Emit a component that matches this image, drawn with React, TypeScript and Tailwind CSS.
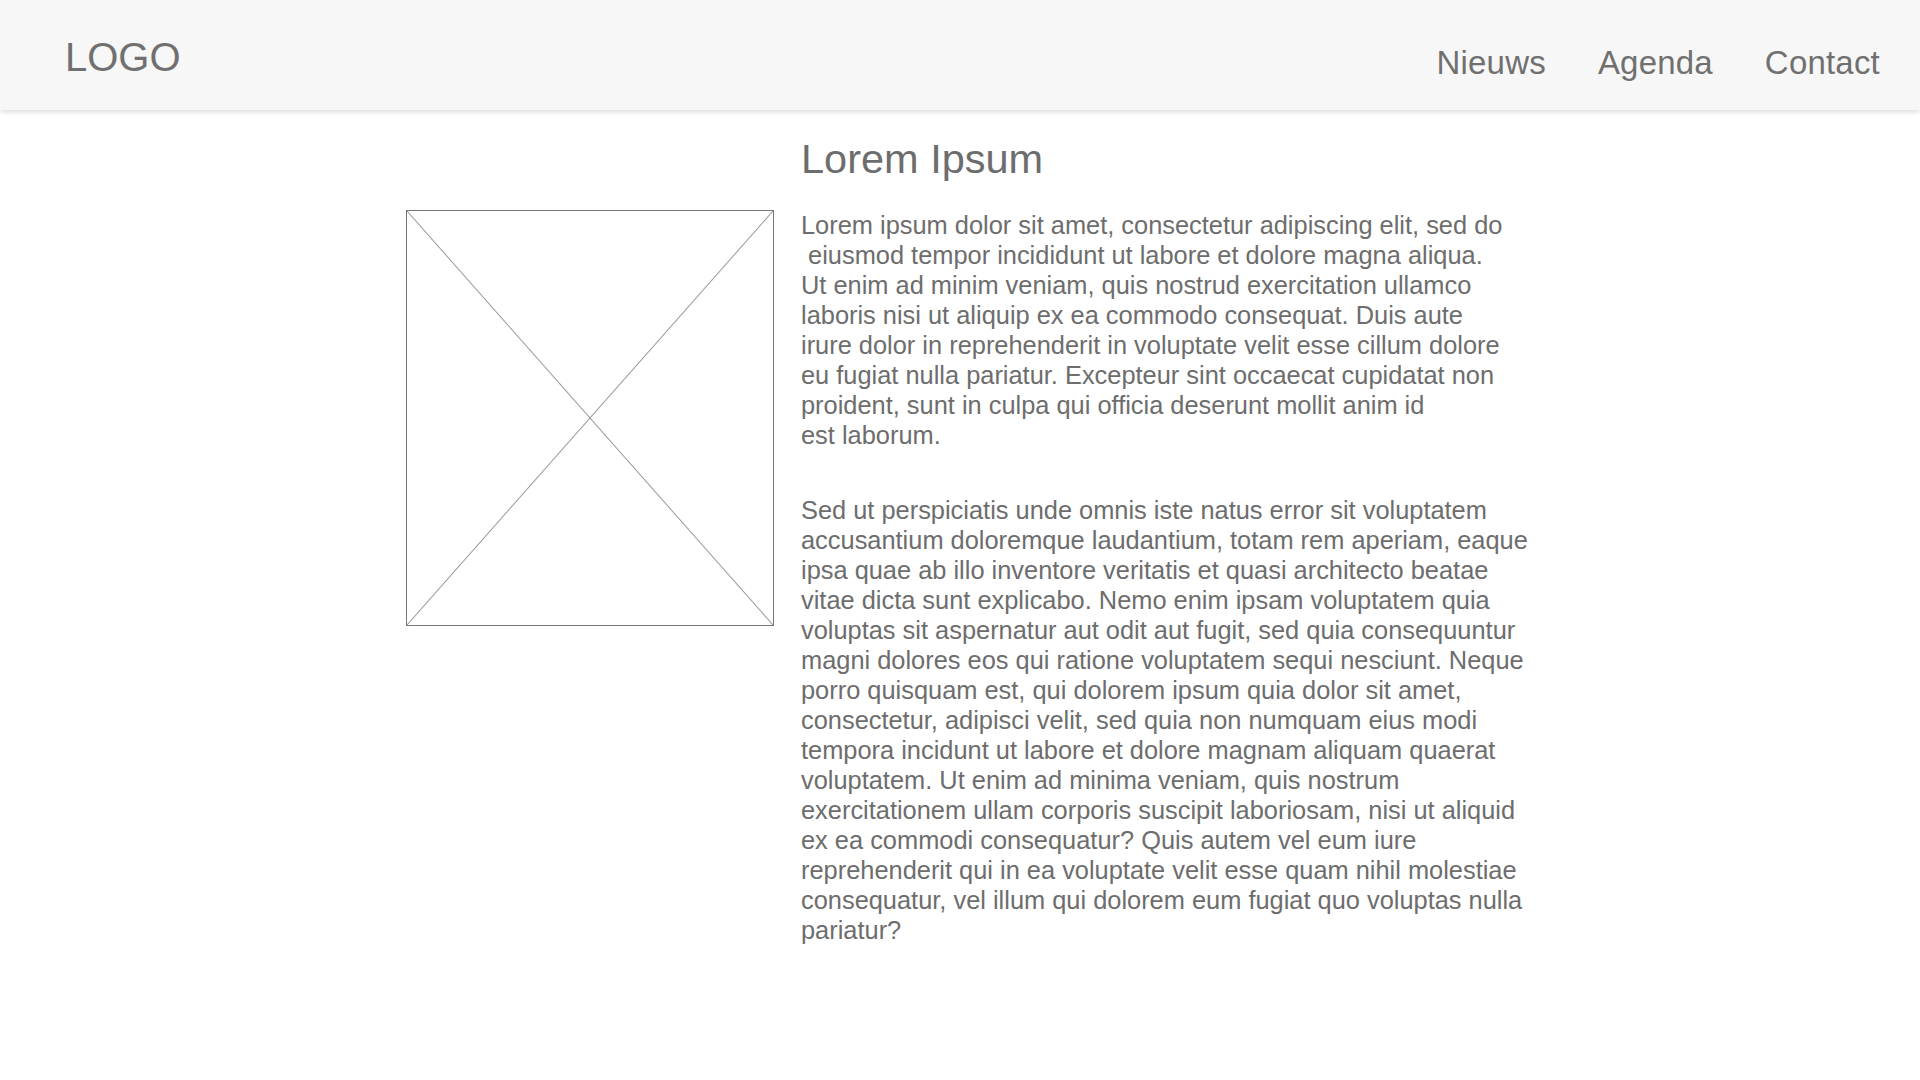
import React from "react";

const p1 = [
  "Lorem ipsum dolor sit amet, consectetur adipiscing elit, sed do",
  "\u00a0eiusmod tempor incididunt ut labore et dolore magna aliqua.",
  "Ut enim ad minim veniam, quis nostrud exercitation ullamco",
  "laboris nisi ut aliquip ex ea commodo consequat. Duis aute",
  "irure dolor in reprehenderit in voluptate velit esse cillum dolore",
  "eu fugiat nulla pariatur. Excepteur sint occaecat cupidatat non",
  "proident, sunt in culpa qui officia deserunt mollit anim id",
  "est laborum.",
];

const p2 = [
  "Sed ut perspiciatis unde omnis iste natus error sit voluptatem",
  "accusantium doloremque laudantium, totam rem aperiam, eaque",
  "ipsa quae ab illo inventore veritatis et quasi architecto beatae",
  "vitae dicta sunt explicabo. Nemo enim ipsam voluptatem quia",
  "voluptas sit aspernatur aut odit aut fugit, sed quia consequuntur",
  "magni dolores eos qui ratione voluptatem sequi nesciunt. Neque",
  "porro quisquam est, qui dolorem ipsum quia dolor sit amet,",
  "consectetur, adipisci velit, sed quia non numquam eius modi",
  "tempora incidunt ut labore et dolore magnam aliquam quaerat",
  "voluptatem. Ut enim ad minima veniam, quis nostrum",
  "exercitationem ullam corporis suscipit laboriosam, nisi ut aliquid",
  "ex ea commodi consequatur? Quis autem vel eum iure",
  "reprehenderit qui in ea voluptate velit esse quam nihil molestiae",
  "consequatur, vel illum qui dolorem eum fugiat quo voluptas nulla",
  "pariatur?",
];

export default function App() {
  return (
    <div
      className="min-h-[1080px] w-full bg-white text-[#6d6d6d]"
      style={{ fontFamily: '"Liberation Sans", Arial, Helvetica, sans-serif' }}
    >
      <header className="relative z-10 flex h-[110px] items-start justify-between bg-[#f7f7f7] pl-[65px] pr-[40px] shadow-[0_2px_5px_rgba(0,0,0,0.14)]">
        <div className="pt-[37px] text-[40px] leading-[40px] text-[#707070]">LOGO</div>
        <nav className="flex gap-[52px] pt-[46px] text-[33px] leading-[33px] text-[#707070] tracking-[0.2px]">
          <a>Nieuws</a>
          <a>Agenda</a>
          <a>Contact</a>
        </nav>
      </header>

      <main className="flex items-start gap-[27px] pl-[406px] pt-[25px]">
        <div className="mt-[75px] h-[416px] w-[368px] shrink-0 border border-[#777777]">
          <svg className="block h-full w-full" viewBox="0 0 100 100" preserveAspectRatio="none">
            <line x1="0" y1="0" x2="100" y2="100" stroke="#9a9a9a" strokeWidth="1" vectorEffect="non-scaling-stroke" />
            <line x1="100" y1="0" x2="0" y2="100" stroke="#9a9a9a" strokeWidth="1" vectorEffect="non-scaling-stroke" />
          </svg>
        </div>

        <div className="flex flex-col">
          <h1 className="text-[41.5px] font-normal leading-[48px]">Lorem Ipsum</h1>
          <p className="mt-[27px] whitespace-nowrap text-[25.4px] leading-[30px]">
            {p1.map((l, i) => (
              <React.Fragment key={i}>
                {l}
                {i < p1.length - 1 && <br />}
              </React.Fragment>
            ))}
          </p>
          <p className="mt-[45px] whitespace-nowrap text-[25.4px] leading-[30px]">
            {p2.map((l, i) => (
              <React.Fragment key={i}>
                {l}
                {i < p2.length - 1 && <br />}
              </React.Fragment>
            ))}
          </p>
        </div>
      </main>
    </div>
  );
}
